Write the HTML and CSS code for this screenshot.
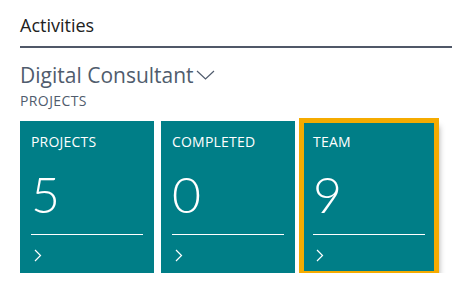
FILE: index.html
```html
<!DOCTYPE html>
<html lang="en">

<head>
    <meta charset="UTF-8">
    <meta name="viewport" content="width=device-width, initial-scale=1.0">
    <title>Activities</title>
    <link rel="stylesheet" href="styles.css">
</head>

<body>
    <div class="page">
        <h1 class="title">Activities</h1>
        <div class="group">
            <h2 class="group-name">Digital Consultant
                <svg class="caret" width="19" height="10" viewBox="0 0 19 10">
                    <polyline points="1,1 9.5,9 18,1" fill="none" stroke="#505c6d" stroke-width="1.2" />
                </svg>
            </h2>
            <div class="group-sub">PROJECTS</div>
            <div class="tiles">
                <a class="tile">
                    <div class="tile-label">PROJECTS</div>
                    <div class="tile-value">5</div>
                    <div class="tile-foot">
                        <svg width="8" height="13" viewBox="0 0 8 13">
                            <polyline points="1,1 6.5,6.5 1,12" fill="none" stroke="#fff" stroke-width="1.2" />
                        </svg>
                    </div>
                </a>
                <a class="tile">
                    <div class="tile-label">COMPLETED</div>
                    <div class="tile-value">0</div>
                    <div class="tile-foot">
                        <svg width="8" height="13" viewBox="0 0 8 13">
                            <polyline points="1,1 6.5,6.5 1,12" fill="none" stroke="#fff" stroke-width="1.2" />
                        </svg>
                    </div>
                </a>
                <a class="tile selected">
                    <div class="tile-label">TEAM</div>
                    <div class="tile-value">9</div>
                    <div class="tile-foot">
                        <svg width="8" height="13" viewBox="0 0 8 13">
                            <polyline points="1,1 6.5,6.5 1,12" fill="none" stroke="#fff" stroke-width="1.2" />
                        </svg>
                    </div>
                </a>
            </div>
        </div>
    </div>
</body>

</html>
```

FILE: styles.css
```css
body {
    margin: 0;
    padding: 0;
    background-color: #ffffff;
    font-family: "Open Sans", "Noto Sans", sans-serif;
}

.page {
    padding: 13px 0 0 20px;
}

.title {
    margin: 0;
    padding-bottom: 9px;
    font-size: 18px;
    font-weight: 400;
    line-height: 24px;
    color: #212121;
    border-bottom: 2px solid #505868;
}

.group {
    padding-top: 13px;
}

.group-name {
    margin: 0;
    font-size: 21px;
    font-weight: 400;
    line-height: 28px;
    color: #505c6d;
}

.caret {
    margin-left: -3px;
    vertical-align: 3px;
}

.group-sub {
    margin-top: 3px;
    font-size: 14px;
    line-height: 18px;
    letter-spacing: 0.4px;
    color: #505c6d;
}

.tiles {
    display: flex;
    gap: 7px;
    margin-top: 11px;
}

.tile {
    display: flex;
    flex-direction: column;
    width: 134px;
    height: 152px;
    padding: 0 11px;
    box-sizing: border-box;
    background-color: #007e87;
    color: #ffffff;
}

.tile.selected {
    outline: 5px solid #f5ab00;
    outline-offset: -2px;
    box-shadow: 3px 5px 6px rgba(0, 0, 0, 0.35);
}

.tile-label {
    margin-top: 12px;
    font-size: 14px;
    line-height: 18px;
    letter-spacing: 0.2px;
}

.tile-value {
    margin-top: 17px;
    font-family: "Lato", "Open Sans", sans-serif;
    font-size: 50px;
    font-weight: 300;
    line-height: 52px;
}

.tile-foot {
    margin-top: 14px;
    padding: 14px 0 0 3px;
    border-top: 1px solid #ffffff;
}

.tile-foot svg {
    display: block;
}
```
